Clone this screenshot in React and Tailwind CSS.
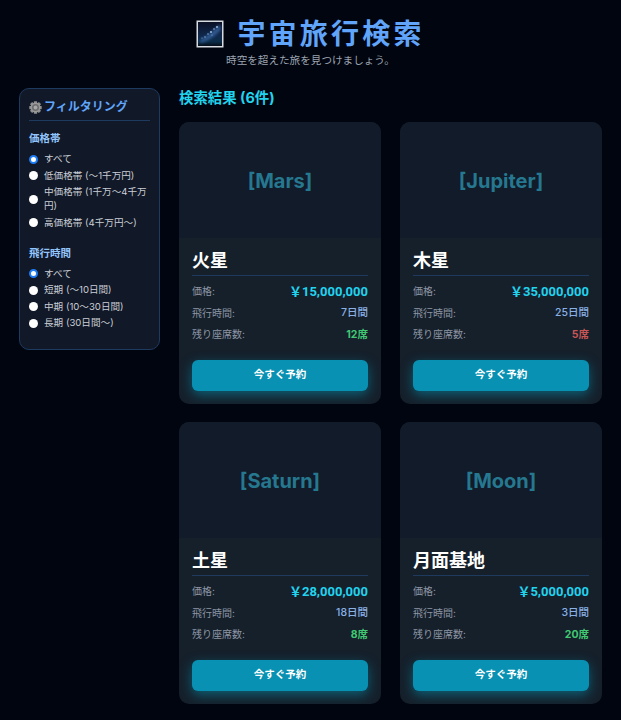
import React from 'react';

const priceOptions = ['すべて', '低価格帯 (〜1千万円)', '中価格帯 (1千万〜4千万円)', '高価格帯 (4千万円〜)'];
const timeOptions = ['すべて', '短期 (〜10日間)', '中期 (10〜30日間)', '長期 (30日間〜)'];

const trips = [
  { id: 'Mars', name: '火星', price: '15,000,000', days: '7日間', seats: '12席', low: false },
  { id: 'Jupiter', name: '木星', price: '35,000,000', days: '25日間', seats: '5席', low: true },
  { id: 'Saturn', name: '土星', price: '28,000,000', days: '18日間', seats: '8席', low: false },
  { id: 'Moon', name: '月面基地', price: '5,000,000', days: '3日間', seats: '20席', low: false },
];

function GalaxyIcon() {
  return (
    <svg width="28" height="28" viewBox="0 0 28 28" className="shrink-0">
      <defs>
        <linearGradient id="sky" x1="0" y1="0" x2="0" y2="1">
          <stop offset="0" stopColor="#0b1024" />
          <stop offset="0.6" stopColor="#10294e" />
          <stop offset="0.82" stopColor="#0b2c48" />
          <stop offset="1" stopColor="#050d18" />
        </linearGradient>
        <filter id="soft"><feGaussianBlur stdDeviation="1.4" /></filter>
      </defs>
      <rect x="0.5" y="0.5" width="27" height="27" fill="#d8dbe0" />
      <rect x="2" y="2" width="24" height="24" fill="url(#sky)" />
      <path d="M3 21 C10 17 17 11 24 4 L25 10 C19 16 12 21 5 23 Z" fill="#3f6fb0" opacity="0.7" filter="url(#soft)" />
      <circle cx="21" cy="7" r="0.9" fill="#a9cdf2" />
      <circle cx="18" cy="9" r="0.8" fill="#8fbbe8" />
      <circle cx="15" cy="12" r="0.9" fill="#a9cdf2" />
      <circle cx="12" cy="14" r="0.7" fill="#8fbbe8" />
      <circle cx="9" cy="17" r="0.7" fill="#8fbbe8" />
      <circle cx="16" cy="15" r="0.6" fill="#7fb0e0" />
      <circle cx="6" cy="18" r="0.6" fill="#7fb0e0" />
    </svg>
  );
}

function GearIcon() {
  const teeth = [0, 45, 90, 135];
  return (
    <svg width="13" height="13" viewBox="0 0 24 24" className="shrink-0">
      {teeth.map((deg) => (
        <rect key={deg} x="9" y="0.5" width="6" height="23" rx="1" fill="#8f8f8f" transform={`rotate(${deg} 12 12)`} />
      ))}
      <circle cx="12" cy="12" r="9" fill="#9a9a9a" />
      <circle cx="12" cy="12" r="6.5" fill="#6e6e6e" />
      <circle cx="12" cy="12" r="3.5" fill="#a8a8a8" />
    </svg>
  );
}

function Radio({ label, checked }) {
  return (
    <label className="flex items-center gap-[6px] text-[9.6px] leading-[14px] text-[#c9ced6]">
      <span className={checked
        ? 'w-[9px] h-[9px] shrink-0 rounded-full bg-white border-[2.5px] border-[#1d7bf5]'
        : 'w-[9px] h-[9px] shrink-0 rounded-full bg-white'} />
      <span>{label}</span>
    </label>
  );
}

function Row({ label, children }) {
  return (
    <div className="flex items-center justify-between h-[21.5px]">
      <span className="text-[10px] text-[#8d95a3]">{label}</span>
      {children}
    </div>
  );
}

function TripCard({ trip }) {
  return (
    <div className="rounded-[10px] overflow-hidden bg-[#15202b]">
      <div className="h-[116px] pt-[2px] bg-[#121b29] flex items-center justify-center">
        <span className="text-[20px] font-bold text-[#25788f]">[{trip.id}]</span>
      </div>
      <div className="px-[13px] pt-[11px] pb-[13.5px]">
        <h3 className="text-[18px] leading-[24px] font-bold text-white pb-[2px] border-b border-[#1e3a5f]">{trip.name}</h3>
        <div className="mt-[5px]">
          <Row label="価格:">
            <span className="text-[13px] font-bold text-[#22d3ee]" style={{ fontFamily: 'Roboto, "Noto Sans CJK JP", sans-serif' }}>￥{trip.price}</span>
          </Row>
          <Row label="飛行時間:"><span className="text-[10.5px] font-medium text-[#8ab0e6]">{trip.days}</span></Row>
          <Row label="残り座席数:">
            <span className={trip.low ? 'text-[10.5px] font-bold text-[#c95656]' : 'text-[10.5px] font-bold text-[#42c873]'}>{trip.seats}</span>
          </Row>
        </div>
        <button className="mt-[14px] w-full h-[31px] rounded-[6px] bg-[#0891b2] text-white text-[10.5px] font-bold shadow-[0_4px_12px_rgba(8,145,178,0.55)]">
          今すぐ予約
        </button>
      </div>
    </div>
  );
}

export default function App() {
  return (
    <div
      className="h-[720px] overflow-hidden bg-[#000510] px-[19px] pt-[17px]"
      style={{ fontFamily: 'Inter, "Noto Sans CJK JP", sans-serif' }}
    >
      <header className="text-center">
        <div className="flex items-center justify-center gap-[13px]">
          <GalaxyIcon />
          <h1 className="text-[28px] leading-[34px] font-bold tracking-[3.2px] text-[#60a5fa]">宇宙旅行検索</h1>
        </div>
        <p className="mt-[3px] text-[10.6px] leading-[14px] text-[#9ca3af]">時空を超えた旅を見つけましょう。</p>
      </header>

      <div className="flex items-start gap-[19px] mt-[20px]">
        <aside className="w-[141px] shrink-0 rounded-[10px] border border-[#1e3a5f] bg-[#111827] px-[9px] pt-[9px] pb-[19px]">
          <h2 className="flex items-center gap-[2px] text-[12px] leading-[18px] font-bold text-[#60a5fa] pb-[4px] border-b border-[#1e3a5f]">
            <GearIcon />
            フィルタリング
          </h2>
          <h3 className="mt-[11px] text-[10.5px] leading-[14px] font-bold text-[#93c5fd]">価格帯</h3>
          <div className="mt-[6px] flex flex-col gap-[2.5px]">
            {priceOptions.map((o, i) => <Radio key={o} label={o} checked={i === 0} />)}
          </div>
          <h3 className="mt-[17px] text-[10.5px] leading-[14px] font-bold text-[#93c5fd]">飛行時間</h3>
          <div className="mt-[6px] flex flex-col gap-[2.5px]">
            {timeOptions.map((o, i) => <Radio key={o} label={o} checked={i === 0} />)}
          </div>
        </aside>

        <main className="flex-1">
          <h2 className="text-[14.4px] leading-[20px] font-bold text-[#22d3ee]">検索結果 (6件)</h2>
          <div className="grid grid-cols-2 gap-x-[19px] gap-y-[18px] mt-[14px]">
            {trips.map((t) => <TripCard key={t.id} trip={t} />)}
          </div>
        </main>
      </div>
    </div>
  );
}
